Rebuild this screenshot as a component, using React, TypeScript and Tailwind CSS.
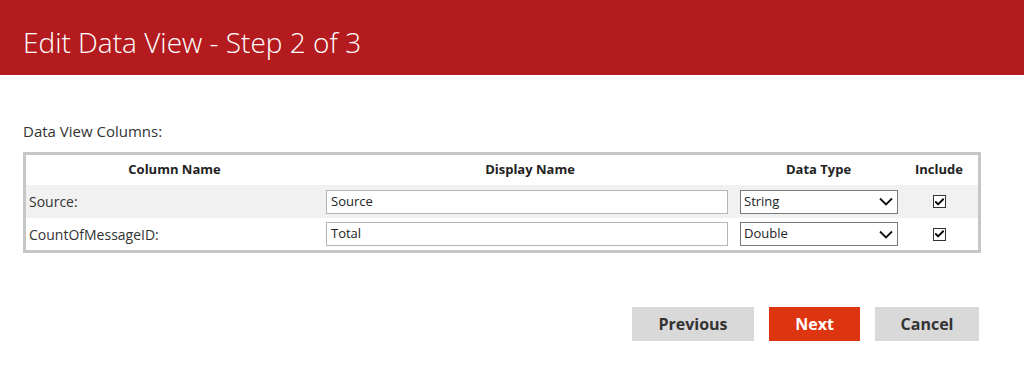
import { Check } from "lucide-react";

interface ColumnRow {
  id: string;
  source: string;
  display: string;
  dataType: string;
  include: boolean;
}

const rows: ColumnRow[] = [
  { id: "source", source: "Source:", display: "Source", dataType: "String", include: true },
  { id: "count", source: "CountOfMessageID:", display: "Total", dataType: "Double", include: true },
];

const font = { fontFamily: '"Segoe UI", "Open Sans", "Noto Sans", sans-serif' };

function SelectBox({ value }: { value: string }) {
  return (
    <div className="flex h-[24px] w-[158px] items-center justify-between border border-[#7a7a7a] bg-white pl-[3px] pr-[4px] text-[13px] text-[#222]">
      <span>{value}</span>
      <svg width="14" height="9" viewBox="0 0 14 9" aria-hidden>
        <path d="M1 1.5 L7 7.5 L13 1.5" fill="none" stroke="#111" strokeWidth="1.8" />
      </svg>
    </div>
  );
}

function CheckBox({ checked }: { checked: boolean }) {
  return (
    <span className="inline-flex size-[13px] items-center justify-center border border-[#333] bg-white">
      {checked && <Check className="size-[12px] text-black" strokeWidth={4} aria-hidden />}
    </span>
  );
}

export default function App() {
  return (
    <div className="h-[376px] w-[1024px] bg-white" style={font}>
      <header className="flex h-[75px] items-start bg-[#b41b1e] pl-[23px] pt-[24px]">
        <h1 className="text-[28px] font-light leading-[36px] text-white">Edit Data View - Step 2 of 3</h1>
      </header>

      <main className="px-[23px] pt-[46px]">
        <p className="text-[15px] leading-[21px] text-[#333]">Data View Columns:</p>

        <div className="mt-[10px] w-[958px] border-[3px] border-[#c6c6c6] text-[13px] text-[#333]">
          <div className="grid h-[30px] grid-cols-[297px_414px_163px_78px] items-center font-bold text-[#222]">
            <span className="text-center">Column Name</span>
            <span className="text-center">Display Name</span>
            <span className="text-center">Data Type</span>
            <span className="text-center">Include</span>
          </div>
          {rows.map((row, i) => (
            <div
              key={row.id}
              className={`grid grid-cols-[297px_414px_163px_78px] items-center ${
                i === 0 ? "h-[33px] bg-[#f1f1f1]" : "h-[32px] bg-white"
              }`}
            >
              <span className="pl-[3px] text-[14px]">{row.source}</span>
              <div className="pl-[3px]">
                <div className="flex h-[24px] w-[402px] items-center border border-[#b5b5b5] bg-white pl-[4px] text-[#222]">
                  {row.display}
                </div>
              </div>
              <div className="pl-[3px]">
                <SelectBox value={row.dataType} />
              </div>
              <div className="flex justify-center">
                <CheckBox checked={row.include} />
              </div>
            </div>
          ))}
        </div>

        <div className="mt-[54px] flex w-[956px] justify-end gap-[15px]">
          <button className="h-[34px] w-[122px] bg-[#d9d9d9] text-[16px] font-bold text-[#333]">Previous</button>
          <button className="h-[34px] w-[91px] bg-[#dc3510] text-[16px] font-bold text-white">Next</button>
          <button className="h-[34px] w-[104px] bg-[#d9d9d9] text-[16px] font-bold text-[#333]">Cancel</button>
        </div>
      </main>
    </div>
  );
}
